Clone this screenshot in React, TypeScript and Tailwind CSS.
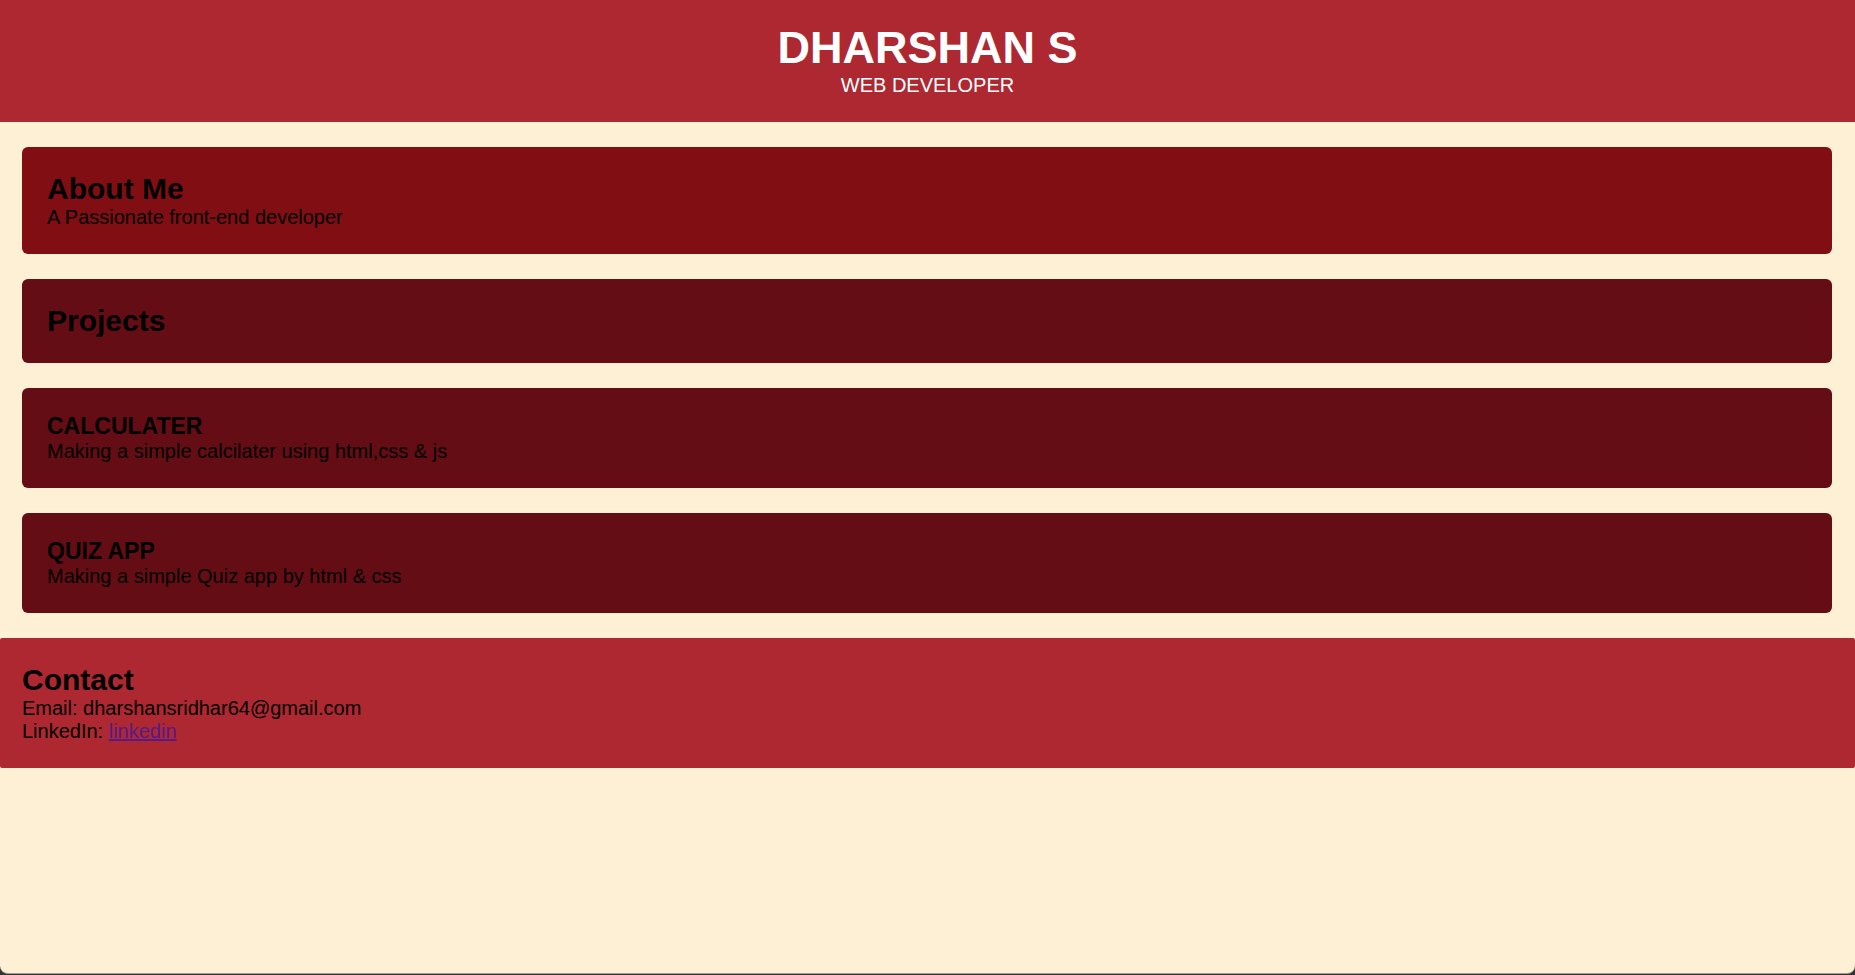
import type { ReactNode } from "react";

type CardProps = {
  tone: string;
  children: ReactNode;
};

const projects = [
  { name: "CALCULATER", text: "Making a simple calcilater using html,css & js" },
  { name: "QUIZ APP", text: "Making a simple Quiz app by html & css" },
];

function Card({ tone, children }: CardProps) {
  return <section className={`rounded-md p-[25px] ${tone}`}>{children}</section>;
}

export default function App() {
  return (
    <div className="flex min-h-screen flex-col bg-[#333333] pb-px font-['Liberation_Sans',Arial,sans-serif] text-[20px] leading-[23px] text-black">
      <div className="flex-1 rounded-b-lg border-b border-[#a1998a] bg-[#fdf0d5]">
        <header className="bg-[#ad2831] pt-[22px] pb-[25px] text-center text-white">
          <h1 className="text-[45px] leading-[52px] font-bold">DHARSHAN S</h1>
          <p>WEB DEVELOPER</p>
        </header>

        <main className="flex flex-col gap-[25px] py-[25px] pr-[23px] pl-[22px]">
          <Card tone="bg-[#800e13]">
            <h2 className="text-[30px] leading-[34px] font-bold">About Me</h2>
            <p>A Passionate front-end developer</p>
          </Card>
          <Card tone="bg-[#640d14]">
            <h2 className="text-[30px] leading-[34px] font-bold">Projects</h2>
          </Card>
          {projects.map((project) => (
            <Card key={project.name} tone="bg-[#640d14]">
              <h3 className="text-[23px] leading-[27px] font-bold">{project.name}</h3>
              <p>{project.text}</p>
            </Card>
          ))}
        </main>

        <footer className="rounded-xs bg-[#ad2831] px-[22px] py-[25px]">
          <h2 className="text-[30px] leading-[34px] font-bold">Contact</h2>
          <p>Email: dharshansridhar64@gmail.com</p>
          <p>
            LinkedIn:{" "}
            <a href="#linkedin" className="text-[#551a8b] underline">
              linkedin
            </a>
          </p>
        </footer>
      </div>
    </div>
  );
}
